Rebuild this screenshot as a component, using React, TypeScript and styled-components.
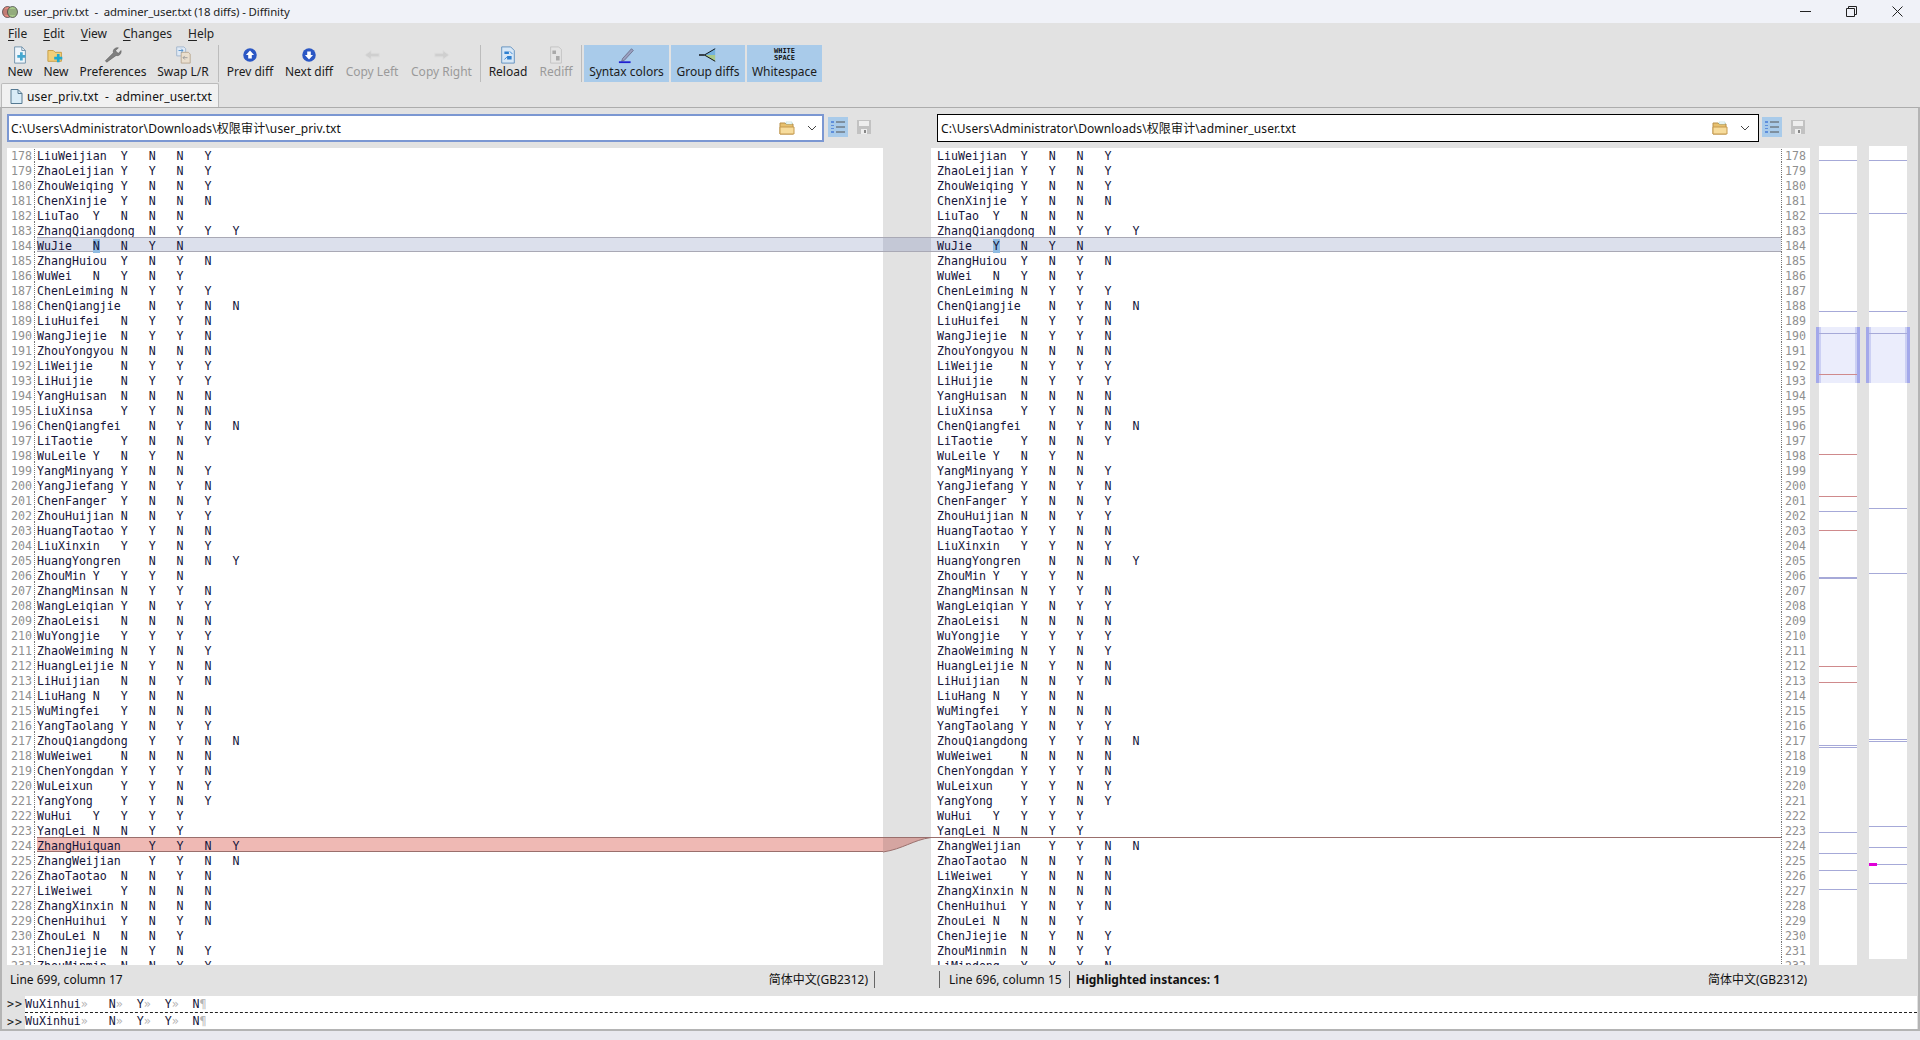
import React from "react";
import styled, { createGlobalStyle } from "styled-components";

const Global = createGlobalStyle`
  html, body { margin: 0; padding: 0; height: 100%; overflow: hidden; background: #e9e9ef; }
  #root { height: 1040px; }
`;

const UI = `"Noto Sans", "Noto Sans CJK SC", sans-serif`;
const MONO = `"DejaVu Sans Mono", "Noto Sans CJK SC", monospace`;

const Window = styled.div`
  width: 1920px; height: 1040px; display: flex; flex-direction: column;
  font-family: ${UI}; font-size: 12px; color: #111; background: #e2e2e2; overflow: hidden;
`;
const TitleBar = styled.div`
  height: 23px; flex: none; background: #f0f2f8; display: flex; align-items: center; padding-left: 2px;
`;
const TitleText = styled.span` margin-left: 6px; font-size: 11.4px; letter-spacing: -0.1px; color: #222; white-space: pre; `;
const WinButtons = styled.div` margin-left: auto; display: flex; `;
const WinButton = styled.div` width: 46px; height: 23px; display: flex; align-items: center; justify-content: center; `;
const MenuBar = styled.div` height: 21px; flex: none; display: flex; align-items: center; padding-left: 8px; gap: 16px; `;
const MenuItem = styled.span` font-size: 12px; color: #222; u { text-decoration-thickness: 1px; text-underline-offset: 2px; } `;
const ToolBar = styled.div` height: 39px; box-sizing: border-box; padding: 1px 0 1px 5px; flex: none; display: flex; align-items: stretch; `;
const Tool = styled.div<{ $w: number; $on?: boolean; $off?: boolean }>`
  width: ${(p) => p.$w}px; flex: none; display: flex; flex-direction: column; align-items: center;
  background: ${(p) => (p.$on ? "#a9cbea" : "transparent")};
  color: ${(p) => (p.$off ? "#9a9a9a" : "#1c1c1c")};
  margin-right: ${(p) => (p.$on ? 2 : 0)}px;
  span { font-size: 12px; line-height: 15px; white-space: nowrap; }
  svg { height: 18px; width: 18px; display: block; margin-top: 1px; flex: none; }
`;
const ToolSep = styled.div<{ $after?: number }>` width: 1px; background: #bcbcbc; margin: 0 ${(p) => p.$after ?? 3}px 0 1px; flex: none; `;
const WsIcon = styled.div`
  height: 18px; margin-top: 1px; flex: none; font: 700 7px/6.5px ${MONO}; color: #111; text-align: center; padding-top: 2px; box-sizing: border-box;
`;
const TabStrip = styled.div` height: 24px; flex: none; display: flex; align-items: flex-end; padding-left: 1px; `;
const Tab = styled.div`
  width: 218px; height: 24px; box-sizing: border-box; background: #f1f1f1; border: 1px solid #bbb; border-bottom: none;
  border-radius: 2px 2px 0 0; display: flex; align-items: center; padding: 2px 0 0 8px; gap: 4px; white-space: pre; font-size: 12px; letter-spacing: 0.15px;
`;
const Frame = styled.div`
  height: 924px; flex: none; box-sizing: border-box; border-top: 1px solid #acacac; border-left: 2px solid #b4b4b4;
  border-right: 2px solid #b4b4b4; border-bottom: 2px solid #b4b4b4; display: flex; flex-direction: column;
`;
const PathRow = styled.div` height: 39px; flex: none; display: flex; `;
const PathGroup = styled.div<{ $w: number; $pad: number }>` width: ${(p) => p.$w}px; flex: none; padding-left: ${(p) => p.$pad}px; padding-top: 6px; box-sizing: border-box; display: flex; align-items: flex-start; `;
const PathBox = styled.div<{ $w: number; $focus?: boolean }>`
  width: ${(p) => p.$w}px; height: 28px; box-sizing: border-box; background: #fff; flex: none;
  border: ${(p) => (p.$focus ? "2px solid #7b97d2" : "1px solid #000")};
  display: flex; align-items: center; padding-left: ${(p) => (p.$focus ? 2 : 3)}px; padding-right: ${(p) => (p.$focus ? 5 : 8)}px; font-size: 12px;
`;
const PathText = styled.span` flex: 1; white-space: pre; letter-spacing: 0.13px; `;
const Spacer = styled.span` width: 12px; flex: none; `;
const MiniIcon = styled.div<{ $on?: boolean; $ml: number }>`
  width: 20px; height: 20px; margin-top: 3px; margin-left: ${(p) => p.$ml}px; display: flex; align-items: center; justify-content: center; flex: none;
  background: ${(p) => (p.$on ? "#a9cbea" : "transparent")};
`;
const Panes = styled.div` height: 818px; flex: none; display: flex; `;
const Pane = styled.div<{ $w: number }>` width: ${(p) => p.$w}px; flex: none; background: #fff; overflow: hidden; margin-top: 1px; `;
const PaneInner = styled.div` margin-top: -1px; `;
const LeftInset = styled.div` width: 5px; flex: none; `;
const Row = styled.div<{ $hl?: "cur" | "del" | "none" }>`
  height: 15px; display: flex; font: 11.6px/19px ${MONO}; box-sizing: border-box; white-space: pre; position: relative;
  background: ${(p) => (p.$hl === "cur" ? "#dce0ec" : p.$hl === "del" ? "#efb9b4" : "transparent")};
  box-shadow: ${(p) =>
    p.$hl === "cur" ? "inset 0 1px 0 #a9a9b5, inset 0 -1px 0 #a9a9b5" :
    p.$hl === "del" ? "inset 0 1px 0 #9a6f6c, inset 0 -1px 0 #9a6f6c" :
    p.$hl === "none" ? "inset 0 1px 0 #9a6f6c" : "none"};
`;
const Num = styled.div` width: 25px; padding-right: 2px; text-align: right; color: #8f8f8f; letter-spacing: 0; flex: none; box-sizing: content-box; background: #fff; `;
const Dots = styled.div` width: 3px; flex: none; border-left: 1px dotted #777; box-sizing: border-box; background: #fff; `;
const Code = styled.div<{ $pad: number }>` padding-left: ${(p) => p.$pad}px; letter-spacing: 0; flex: 1; color: #14143a; `;
const Mark = styled.span` background: #8fbce2; `;
const Gutter = styled.div` width: 48px; flex: none; position: relative; `;
const GutterArt = styled.svg` display: block; `;
const NumPane = styled.div` width: 29px; flex: none; background: #fff; overflow: hidden; margin-top: 1px; `;
const RightNum = styled.div` height: 15px; font: 11.6px/19px ${MONO}; color: #8f8f8f; border-left: 1px dotted #777; padding-left: 3px; box-sizing: border-box; `;
const MapSlot = styled.div<{ $gap: number; $h: number }>`
  width: 38px; height: ${(p) => p.$h}px; background: #fff; flex: none; margin-left: ${(p) => p.$gap}px; position: relative; margin-top: -1px;
`;
const ViewBox = styled.div`
  position: absolute; left: -3px; right: -3px; top: 181px; height: 56px; background: #ebedfc;
  border-left: 3px solid #a4a9ea; border-right: 3px solid #a4a9ea; box-sizing: border-box; box-shadow: inset 2px 0 0 #ccd0f4, inset -2px 0 0 #ccd0f4;
`;
const MapLine = styled.div<{ $top: number; $red?: boolean; $h?: number }>`
  position: absolute; left: 0; right: 0; top: ${(p) => p.$top}px; height: ${(p) => p.$h ?? 1}px;
  background: ${(p) => (p.$red ? "#cf8a8c" : "#a6a9d8")};
`;
const MapMark = styled.div` position: absolute; left: 0; width: 8px; top: 717px; height: 3px; background: #e000d8; `;
const StatusBar = styled.div` height: 31px; box-sizing: border-box; padding-bottom: 3px; flex: none; display: flex; align-items: center; font-size: 12px; `;
const StatusCell = styled.div<{ $w: number; $sep?: boolean; $bold?: boolean; $right?: boolean; $pl?: number }>`
  width: ${(p) => p.$w}px; height: 17px; line-height: 17px; flex: none; box-sizing: border-box; white-space: pre;
  border-right: ${(p) => (p.$sep ? "1px solid #666" : "none")};
  font-weight: ${(p) => (p.$bold ? 700 : 400)};
  text-align: ${(p) => (p.$right ? "right" : "left")};
  padding: 0 6px 0 ${(p) => p.$pl ?? 6}px;
`;
const Bottom = styled.div` height: 33px; flex: none; display: grid; grid-template-columns: 23px 1fr; margin-right: 1px; `;
const Arrow = styled.div<{ $low?: boolean }>` font: 11.6px/16px ${MONO}; color: #222; padding: ${(p) => (p.$low ? 1 : 0)}px 0 0 5px; letter-spacing: 1px; white-space: pre; `;
const DiffLine = styled.div<{ $dash?: boolean }>`
  background: #fff; font: 11.6px/16px ${MONO}; color: #14143a; height: ${(p) => (p.$dash ? 17 : 16)}px;
  border-bottom: ${(p) => (p.$dash ? "1px dashed #222" : "none")}; box-sizing: border-box; white-space: pre;
  i { font-style: normal; color: #b5b5b5; }
`;
const Foot = styled.div` flex: 1; background: #e9e9ef; `;

const data: [string, string][] = [
  ["LiuWeijian", "YNNY"], ["ZhaoLeijian", "YYNY"], ["ZhouWeiqing", "YNNY"], ["ChenXinjie", "YNNN"],
  ["LiuTao", "YNNN"], ["ZhangQiangdong", "NYYY"], ["WuJie", "NNYN"], ["ZhangHuiou", "YNYN"],
  ["WuWei", "NYNY"], ["ChenLeiming", "NYYY"], ["ChenQiangjie", "NYNN"], ["LiuHuifei", "NYYN"],
  ["WangJiejie", "NYYN"], ["ZhouYongyou", "NNNN"], ["LiWeijie", "NYYY"], ["LiHuijie", "NYYY"],
  ["YangHuisan", "NNNN"], ["LiuXinsa", "YYNN"], ["ChenQiangfei", "NYNN"], ["LiTaotie", "YNNY"],
  ["WuLeile", "YNYN"], ["YangMinyang", "YNNY"], ["YangJiefang", "YNYN"], ["ChenFanger", "YNNY"],
  ["ZhouHuijian", "NNYY"], ["HuangTaotao", "YYNN"], ["LiuXinxin", "YYNY"], ["HuangYongren", "NNNY"],
  ["ZhouMin", "YYYN"], ["ZhangMinsan", "NYYN"], ["WangLeiqian", "YNYY"], ["ZhaoLeisi", "NNNN"],
  ["WuYongjie", "YYYY"], ["ZhaoWeiming", "NYNY"], ["HuangLeijie", "NYNN"], ["LiHuijian", "NNYN"],
  ["LiuHang", "NYNN"], ["WuMingfei", "YNNN"], ["YangTaolang", "YNYY"], ["ZhouQiangdong", "YYNN"],
  ["WuWeiwei", "NNNN"], ["ChenYongdan", "YYYN"], ["WuLeixun", "YYNY"], ["YangYong", "YYNY"],
  ["WuHui", "YYYY"], ["YangLei", "NNYY"],
];
const tailLeft: [string, string][] = [
  ["ZhangHuiquan", "YYNY"], ["ZhangWeijian", "YYNN"], ["ZhaoTaotao", "NNYN"], ["LiWeiwei", "YNNN"],
  ["ZhangXinxin", "NNNN"], ["ChenHuihui", "YNYN"], ["ZhouLei", "NNNY"], ["ChenJiejie", "NYNY"], ["ZhouMinmin", "NNYY"],
];
const tailRight: [string, string][] = [
  ["ZhangWeijian", "YYNN"], ["ZhaoTaotao", "NNYN"], ["LiWeiwei", "YNNN"], ["ZhangXinxin", "NNNN"],
  ["ChenHuihui", "YNYN"], ["ZhouLei", "NNNY"], ["ChenJiejie", "NYNY"], ["ZhouMinmin", "NNYY"], ["LiMindong", "YYYN"],
];
const pad = (s: string) => s.padEnd((Math.floor(s.length / 4) + 1) * 4, " ");
const fmt = (name: string, f: string) => pad(name) + f.split("").join("   ");

const leftRows = [...data, ...tailLeft];
const rightRows = [...data.map((r, i) => (i === 6 ? (["WuJie", "YNYN"] as [string, string]) : r)), ...tailRight];
const nums = Array.from({ length: 55 }, (_, i) => 178 + i);

const leftMap = [[14], [67], [165], [187], [228, 1], [308, 1], [350, 1], [365], [384, 1], [431, 0, 2], [520, 1], [536, 1], [599], [601], [686], [707], [724], [743]];
const rightMap = [[14], [67], [165], [187], [362], [427], [593], [595], [680], [701], [718], [737]];

const IconNew = () => (
  <svg viewBox="0 0 20 20"><path d="M4 1h8l4 4v14H4z" fill="#eef5fb" stroke="#6d8ea8" /><path d="M12 1v4h4" fill="none" stroke="#6d8ea8" /><path d="M10 7h3v3h3v3h-3v3h-3v-3H7v-3h3z" fill="#45a7cf" /></svg>
);
const IconFolderNew = () => (
  <svg viewBox="0 0 20 20"><path d="M1 5h6l2 2h7v10H1z" fill="#f2cf7a" stroke="#c59a3f" /><path d="M11 9h3v3h3v3h-3v3h-3v-3H8v-3h3z" fill="#1fa8cf" /></svg>
);
const IconWrench = () => (
  <svg viewBox="0 0 20 20"><path d="M3 18l-1.500-1.500 9-9c-1-3 1.500-6 5.500-5.500l-3 3 1 2 2 1 3-3c.5 4-2.500 6.500-5.500 5.500z" fill="#7f7f7f" stroke="#555" strokeWidth=".6" /></svg>
);
const IconSwap = () => (
  <svg viewBox="0 0 20 20"><path d="M3 1h8l2 2v8H3z" fill="#dfe9f5" stroke="#9fb4cc" /><path d="M8 7h8l2 2v10H8z" fill="#eadfce" stroke="#b8a68f" /><path d="M5 5h5M8 3l2 2-2 2" fill="none" stroke="#4f8ecb" /><path d="M15 13h-5M12 11l-2 2 2 2" fill="none" stroke="#999" /></svg>
);
const Round = ({ up }: { up?: boolean }) => (
  <svg viewBox="0 0 20 20"><circle cx="10" cy="10" r="7.500" fill="#2b57c4" /><path d={up ? "M10 5l4.500 5H12v4H8v-4H5.500z" : "M10 15l4.500-5H12V6H8v4H5.500z"} fill="#fff" /></svg>
);
const IconCopy = ({ left }: { left?: boolean }) => (
  <svg viewBox="0 0 20 20"><path d={left ? "M2 10l7-5v3h9v4H9v3z" : "M18 10l-7-5v3H2v4h9v3z"} fill="#cfcfcf" stroke="#dedede" /></svg>
);
const IconReload = () => (
  <svg viewBox="0 0 20 20"><path d="M3 1h10l4 4v14H3z" fill="#d7e7f6" stroke="#5c8dbd" /><path d="M6 6h5v3H6zM9 11h5v4H9z" fill="#2d7fd0" /><path d="M12 6l3 3M6 15l3-3" stroke="#2d7fd0" /></svg>
);
const IconRediff = () => (
  <svg viewBox="0 0 20 20"><path d="M4 1h9l3 3v15H4z" fill="#e4e4e4" stroke="#c2c2c2" /><path d="M6 5h4v4H6zM10 11h4v5h-4z" fill="#a9a9a9" /></svg>
);
const IconPen = () => (
  <svg viewBox="0 0 20 20"><path d="M5 14L15 3l2 2L7 16l-3 1z" fill="#9a9fc0" stroke="#5a5a70" strokeWidth=".7" /><path d="M1 18h13" stroke="#2020d0" strokeWidth="2" /></svg>
);
const IconGroup = () => (
  <svg viewBox="0 0 20 20"><path d="M0 10h6" stroke="#000" strokeWidth="1.500" /><path d="M6 10l12-7v7z" fill="#74b2de" /><path d="M6 10l12 7v-7z" fill="#a9c98a" /><path d="M18 3L6 10l12 7" fill="none" stroke="#000" /></svg>
);
const IconFolder = () => (
  <svg width="16" height="14" viewBox="0 0 16 14"><path d="M1 2h5l1 1h7v10H1z" fill="#e7c06e" stroke="#b8904a" /><path d="M7 1h6v2H7z" fill="#fff" stroke="#9cc" strokeWidth=".5" /><path d="M1 6h14v7H1z" fill="#f7dc9c" stroke="#c59a4f" /></svg>
);
const IconChev = () => (
  <svg width="10" height="6" viewBox="0 0 10 6"><path d="M1 1l4 4 4-4" fill="none" stroke="#444" strokeWidth="1" /></svg>
);
const IconLines = () => (
  <svg width="14" height="14" viewBox="0 0 14 14"><path d="M5 2h9M5 7h9M5 12h9" stroke="#555" strokeWidth="1" /><path d="M0 1h3v2H0zM0 5h3v1H0zM0 8h3v1H0zM0 11h3v2H0z" fill="#5f8fdc" /></svg>
);
const IconSave = () => (
  <svg width="14" height="14" viewBox="0 0 14 14"><path d="M0 0h14v14H0z" fill="#c2c2c2" /><path d="M2 1h10v5H2z" fill="#eee" /><path d="M4 9h6v5H4z" fill="#eee" /><path d="M7 10h2v3H7z" fill="#888" /></svg>
);
const IconApp = () => (
  <svg width="16" height="14" viewBox="0 0 16 14"><ellipse cx="5.500" cy="7" rx="5" ry="5.500" fill="#e58a80" stroke="#333" strokeWidth=".7" /><ellipse cx="10.500" cy="7" rx="5" ry="5.500" fill="#a8c98a" stroke="#333" strokeWidth=".7" /><path d="M1 5h14M1 7h14M1 9h14" stroke="#555" strokeWidth=".5" /></svg>
);
const IconDoc = () => (
  <svg width="13" height="15" viewBox="0 0 13 15"><path d="M1 .5h7l4 4v10H1z" fill="#d9ecf7" stroke="#567a92" /><path d="M8 .5v4h4" fill="none" stroke="#567a92" /></svg>
);

const cr = (i: number, text: string) => {
  if (i !== 6) return text;
  return <>{text.slice(0, 8)}<Mark>{text[8]}</Mark>{text.slice(9)}</>;
};

const Diff = () => (
  <>WuXinhui<i>»</i>{"   N"}<i>»</i>{"  Y"}<i>»</i>{"  Y"}<i>»</i>{"  N"}<i>¶</i></>
);

export default function App() {
  return (
    <Window>
      <Global />
      <TitleBar>
        <IconApp />
        <TitleText>{"user_priv.txt  -  adminer_user.txt (18 diffs) - Diffinity"}</TitleText>
        <WinButtons>
          <WinButton><svg width="11" height="11"><path d="M0 5.500h11" stroke="#222" /></svg></WinButton>
          <WinButton><svg width="11" height="11"><path d="M.5 2.500h8v8h-8zM2.500 2.500v-2h8v8h-2" fill="none" stroke="#222" /></svg></WinButton>
          <WinButton><svg width="11" height="11"><path d="M.5.500l10 10M10.500.500l-10 10" stroke="#222" /></svg></WinButton>
        </WinButtons>
      </TitleBar>
      <MenuBar>
        <MenuItem><u>F</u>ile</MenuItem>
        <MenuItem><u>E</u>dit</MenuItem>
        <MenuItem><u>V</u>iew</MenuItem>
        <MenuItem><u>C</u>hanges</MenuItem>
        <MenuItem><u>H</u>elp</MenuItem>
      </MenuBar>
      <ToolBar>
        <Tool $w={30}><IconNew /><span>New</span></Tool>
        <Tool $w={42}><IconFolderNew /><span>New</span></Tool>
        <Tool $w={72}><IconWrench /><span>Preferences</span></Tool>
        <Tool $w={68}><IconSwap /><span>Swap L/R</span></Tool>
        <ToolSep />
        <Tool $w={56}><Round up /><span>Prev diff</span></Tool>
        <Tool $w={62}><Round /><span>Next diff</span></Tool>
        <Tool $w={64} $off><IconCopy left /><span>Copy Left</span></Tool>
        <Tool $w={75} $off><IconCopy /><span>Copy Right</span></Tool>
        <ToolSep />
        <Tool $w={48}><IconReload /><span>Reload</span></Tool>
        <Tool $w={48} $off><IconRediff /><span>Rediff</span></Tool>
        <ToolSep $after={2} />
        <Tool $w={85} $on><IconPen /><span>Syntax colors</span></Tool>
        <Tool $w={74} $on><IconGroup /><span>Group diffs</span></Tool>
        <Tool $w={75} $on><WsIcon>WHITE<br />SPACE</WsIcon><span>Whitespace</span></Tool>
      </ToolBar>
      <TabStrip>
        <Tab><IconDoc /><span>{"user_priv.txt  -  adminer_user.txt"}</span></Tab>
      </TabStrip>
      <Frame>
        <PathRow>
          <PathGroup $w={931} $pad={5}>
            <PathBox $w={817} $focus>
              <PathText>{"C:\\Users\\Administrator\\Downloads\\权限审计\\user_priv.txt"}</PathText>
              <IconFolder />
              <Spacer />
              <IconChev />
            </PathBox>
            <MiniIcon $on $ml={4}><IconLines /></MiniIcon>
            <MiniIcon $ml={6}><IconSave /></MiniIcon>
          </PathGroup>
          <PathGroup $w={900} $pad={4}>
            <PathBox $w={822}>
              <PathText>{"C:\\Users\\Administrator\\Downloads\\权限审计\\adminer_user.txt"}</PathText>
              <IconFolder />
              <Spacer />
              <IconChev />
            </PathBox>
            <MiniIcon $on $ml={3}><IconLines /></MiniIcon>
            <MiniIcon $ml={6}><IconSave /></MiniIcon>
          </PathGroup>
        </PathRow>
        <Panes>
          <LeftInset />
          <Pane $w={876}>
            <PaneInner>
              {leftRows.map(([n, f], i) => (
                <Row key={i} $hl={i === 6 ? "cur" : i === 46 ? "del" : undefined}>
                  <Num>{nums[i]}</Num>
                  <Dots />
                  <Code $pad={0}>{cr(i, fmt(n, f))}</Code>
                </Row>
              ))}
            </PaneInner>
          </Pane>
          <Gutter>
            <GutterArt width="48" height="818">
              <rect x="0" y="90" width="48" height="15" fill="#c4c8d6" />
              <path d="M0 90.500h48M0 104.500h48" stroke="#a9a9b5" />
              <path d="M0 690L48 690C30 693 20 702 0 705z" fill="#d5a5a1" />
              <path d="M0 705C20 702 30 693 48 690.500M0 690.500h48" fill="none" stroke="#9a6f6c" />
            </GutterArt>
          </Gutter>
          <Pane $w={850}>
            <PaneInner>
              {rightRows.map(([n, f], i) => (
                <Row key={i} $hl={i === 6 ? "cur" : i === 46 ? "none" : undefined}>
                  <Code $pad={6}>{cr(i, fmt(n, f))}</Code>
                </Row>
              ))}
            </PaneInner>
          </Pane>
          <NumPane>
            <PaneInner>
              {nums.map((n) => <RightNum key={n}>{n}</RightNum>)}
            </PaneInner>
          </NumPane>
          <MapSlot $gap={9} $h={819}>
            <ViewBox />
            {leftMap.map(([t, r, h], i) => <MapLine key={i} $top={t} $red={!!r} $h={h} />)}
          </MapSlot>
          <MapSlot $gap={12} $h={813}>
            <ViewBox />
            {rightMap.map(([t], i) => <MapLine key={i} $top={t} />)}
            <MapMark />
          </MapSlot>
        </Panes>
        <StatusBar>
          <StatusCell $w={760} $pl={8}>Line 699, column 17</StatusCell>
          <StatusCell $w={113} $sep $right>简体中文(GB2312)</StatusCell>
          <StatusCell $w={65} $sep> </StatusCell>
          <StatusCell $w={130} $sep $pl={9}>Line 696, column 15</StatusCell>
          <StatusCell $w={632} $bold>Highlighted instances: 1</StatusCell>
          <StatusCell $w={106} $right>简体中文(GB2312)</StatusCell>
        </StatusBar>
        <Bottom>
          <Arrow>{">>"}</Arrow>
          <DiffLine $dash><Diff /></DiffLine>
          <Arrow $low>{">>"}</Arrow>
          <DiffLine><Diff /></DiffLine>
        </Bottom>
      </Frame>
      <Foot />
    </Window>
  );
}
